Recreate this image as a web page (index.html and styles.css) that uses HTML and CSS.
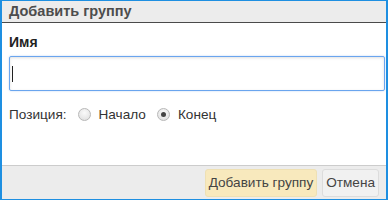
FILE: index.html
```html
<!DOCTYPE html>
<html lang="ru">

<head>
    <meta charset="UTF-8">
    <title>Добавить группу</title>
    <link rel="stylesheet" href="styles.css">
</head>

<body>
    <div class="dialog">
        <div class="dialog-title">Добавить группу</div>
        <div class="dialog-body">
            <label class="field-label" for="group-name">Имя</label>
            <div class="input-box"><span class="caret"></span></div>
            <div class="position-row">
                <span>Позиция:</span>
                <label class="radio"><input type="radio" name="pos"> Начало</label>
                <label class="radio"><input type="radio" name="pos" checked> Конец</label>
            </div>
        </div>
        <div class="dialog-footer">
            <button class="btn btn-primary">Добавить группу</button>
            <button class="btn">Отмена</button>
        </div>
    </div>
</body>

</html>
```

FILE: styles.css
```css
body {
    margin: 0;
    padding: 0;
    font-family: "Liberation Sans", Arial, sans-serif;
    color: #333;
    background: #fff;
}

.dialog {
    width: 388px;
    height: 200px;
    box-sizing: border-box;
    border: 1px solid #1e8fe1;
    border-left-width: 2px;
    border-right-width: 2px;
    display: flex;
    flex-direction: column;
}

.dialog-title {
    height: 21px;
    background-color: #ececec;
    border-bottom: 1px solid #4a4a4a;
    color: #4d4d4d;
    font-weight: bold;
    font-size: 14.5px;
    line-height: 21px;
    padding-left: 7px;
}

.dialog-body {
    flex: 1;
    padding: 11px 1px 0 7px;
}

.field-label {
    display: block;
    font-size: 14px;
    font-weight: bold;
    color: #222;
    height: 22px;
}

.input-box {
    height: 33px;
    border: 1px solid #6aa5ee;
    border-radius: 2px;
    box-shadow: inset 0 1px 3px rgba(0, 0, 0, 0.12), 0 0 2px rgba(90, 150, 230, 0.4);
    display: flex;
    align-items: center;
    padding-left: 2px;
}

.caret {
    width: 1px;
    height: 16px;
    background: #222;
}

.position-row {
    display: flex;
    align-items: center;
    gap: 11px;
    margin-top: 16px;
    font-size: 13.6px;
    color: #333;
}

.radio {
    display: flex;
    align-items: center;
    gap: 8px;
}

.radio input {
    appearance: none;
    margin: 0;
    width: 13px;
    height: 13px;
    border: 1px solid #b8b8b8;
    border-radius: 50%;
    background: radial-gradient(circle at 50% 35%, #fafafa, #dcdcdc);
    box-sizing: border-box;
    display: flex;
    align-items: center;
    justify-content: center;
}

.radio input:checked::after {
    content: "";
    width: 5px;
    height: 5px;
    border-radius: 50%;
    background: #444;
}

.dialog-footer {
    height: 33px;
    background-color: #ececec;
    border-top: 1px solid #ccc;
    display: flex;
    justify-content: flex-end;
    align-items: center;
    gap: 5px;
    padding-right: 7px;
}

.btn {
    height: 28px;
    font-family: "Liberation Sans", Arial, sans-serif;
    font-size: 13.6px;
    color: #444;
    background-color: #f1f1f1;
    border: 1px solid #dcdcdc;
    border-radius: 3px;
    padding: 0 3px;
    cursor: pointer;
}

.btn-primary {
    background-color: #f8e9bd;
    border-color: #eee0b4;
}
```
